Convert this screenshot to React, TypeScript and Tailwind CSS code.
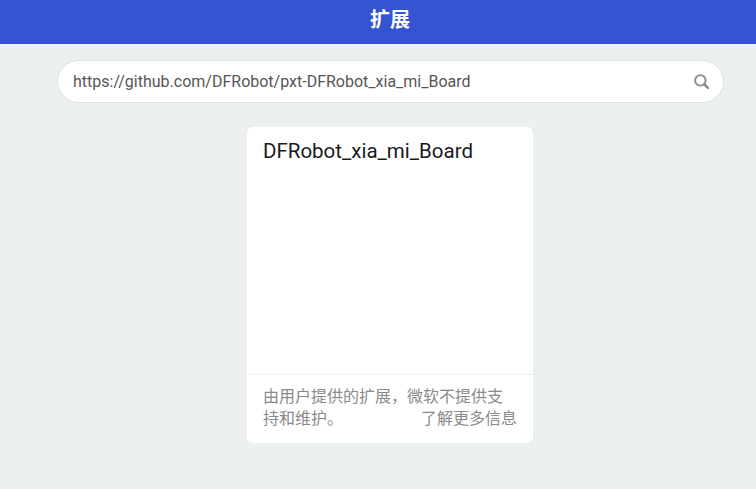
export default function App() {
  return (
    <div className="h-[489px] w-[756px] overflow-hidden bg-[#ecf0f1] font-['Roboto','Noto_Sans_CJK_SC',sans-serif]">
      {/* page is a bit wider than the window, so everything centres at x=390 */}
      <div className="w-[780px]">
        <header className="flex h-[44px] items-center justify-center bg-[#3454d1] pb-1">
          <h1 className="text-xl font-bold text-white">扩展</h1>
        </header>

        <div className="flex justify-center pt-4">
          <div className="flex h-[43px] w-[667px] items-center justify-between rounded-full border border-[#dfe2e3] bg-white pl-[15.5px] pr-[14px]">
            <span className="text-base text-[#555555]">https://github.com/DFRobot/pxt-DFRobot_xia_mi_Board</span>
            <svg className="h-[15px] w-[15px] text-[#8c8c8c]" viewBox="0 0 16 16" fill="none" stroke="currentColor">
              <circle cx="6.8" cy="6.8" r="5.6" strokeWidth="2.1" />
              <path d="M11 11L14.8 14.8" strokeWidth="2.8" strokeLinecap="round" />
            </svg>
          </div>
        </div>

        <div className="flex justify-center pt-6">
          <div className="flex h-[316px] w-[286px] flex-col rounded-md bg-white">
            <div className="flex-1 px-4 pt-[11px]">
              <h2 className="text-[20.5px] leading-[26px] font-normal text-[#1a1a1a]">DFRobot_xia_mi_Board</h2>
            </div>
            <div className="h-[69px] border-t border-[#eeeeee] px-4 pt-[11px] text-base leading-[22px] text-[#8a8a8a]">
              <p>由用户提供的扩展，微软不提供支</p>
              <div className="flex justify-between">
                <span>持和维护。</span>
                <span>了解更多信息</span>
              </div>
            </div>
          </div>
        </div>
      </div>
    </div>
  );
}
